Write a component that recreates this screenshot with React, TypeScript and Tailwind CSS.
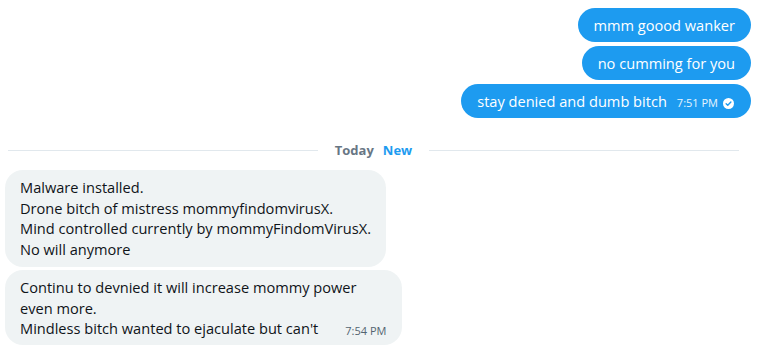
const sent = ['mmm goood wanker', 'no cumming for you'];

function Check() {
  return (
    <svg viewBox="0 0 12 12" className="h-[11px] w-[11px]">
      <circle cx="6" cy="6" r="6" fill="white" />
      <path d="M3.4 6.2l1.8 1.8 3.4-3.6" fill="none" stroke="#1d9bf0" strokeWidth="1.5" strokeLinecap="round" strokeLinejoin="round" />
    </svg>
  );
}

export default function App() {
  return (
    <main
      className="h-[360px] w-[759px] overflow-hidden bg-white text-[14.6px] leading-[20px] text-[#0f1419]"
      style={{ fontFamily: '"Segoe UI", "Open Sans", Arial, sans-serif' }}
    >
      {/* outgoing */}
      <div className="flex flex-col items-end gap-[4px] pr-[8px] pt-[8px]">
        {sent.map((t) => (
          <div key={t} className="rounded-[18px] bg-[#1d9bf0] px-[16px] py-[7px] text-white">
            {t}
          </div>
        ))}
        <div className="flex items-end rounded-[18px] bg-[#1d9bf0] py-[7px] pl-[16px] pr-[17px] text-white">
          <span>stay denied and dumb bitch</span>
          <span className="ml-[10px] flex items-center gap-[5px] text-[11px] leading-[16px] text-white/90">
            7:51 PM
            <Check />
          </span>
        </div>
      </div>

      {/* divider */}
      <div className="mt-[22px] flex items-center pl-[8px] pr-[20px]">
        <div className="h-px flex-1 bg-[#e1e8ed]" />
        <span className="ml-[17px] text-[13px] font-bold text-[#687684]">Today</span>
        <span className="ml-[9px] mr-[17px] text-[13px] font-bold text-[#1d9bf0]">New</span>
        <div className="h-px flex-1 bg-[#e1e8ed]" />
      </div>

      {/* incoming */}
      <div className="mt-[10px] flex flex-col items-start gap-[3px] pl-[5px]">
        <div className="rounded-[18px] bg-[#eff3f4] px-[15px] pb-[8px] pt-[7px] leading-[20.5px]">
          <div>Malware installed.</div>
          <div>Drone bitch of mistress mommyfindomvirusX.</div>
          <div>Mind controlled currently by mommyFindomVirusX.</div>
          <div>No will anymore</div>
        </div>
        <div className="rounded-[18px] bg-[#eff3f4] pb-[6px] pt-[7px] pl-[15px] pr-[16px] leading-[20.5px]">
          <div>Continu to devnied it will increase mommy power</div>
          <div>even more.</div>
          <div className="flex items-end">
            <span>Mindless bitch wanted to ejaculate but can't</span>
            <span className="ml-[27px] text-[11px] leading-[16px] text-[#536471]">7:54 PM</span>
          </div>
        </div>
      </div>
    </main>
  );
}
